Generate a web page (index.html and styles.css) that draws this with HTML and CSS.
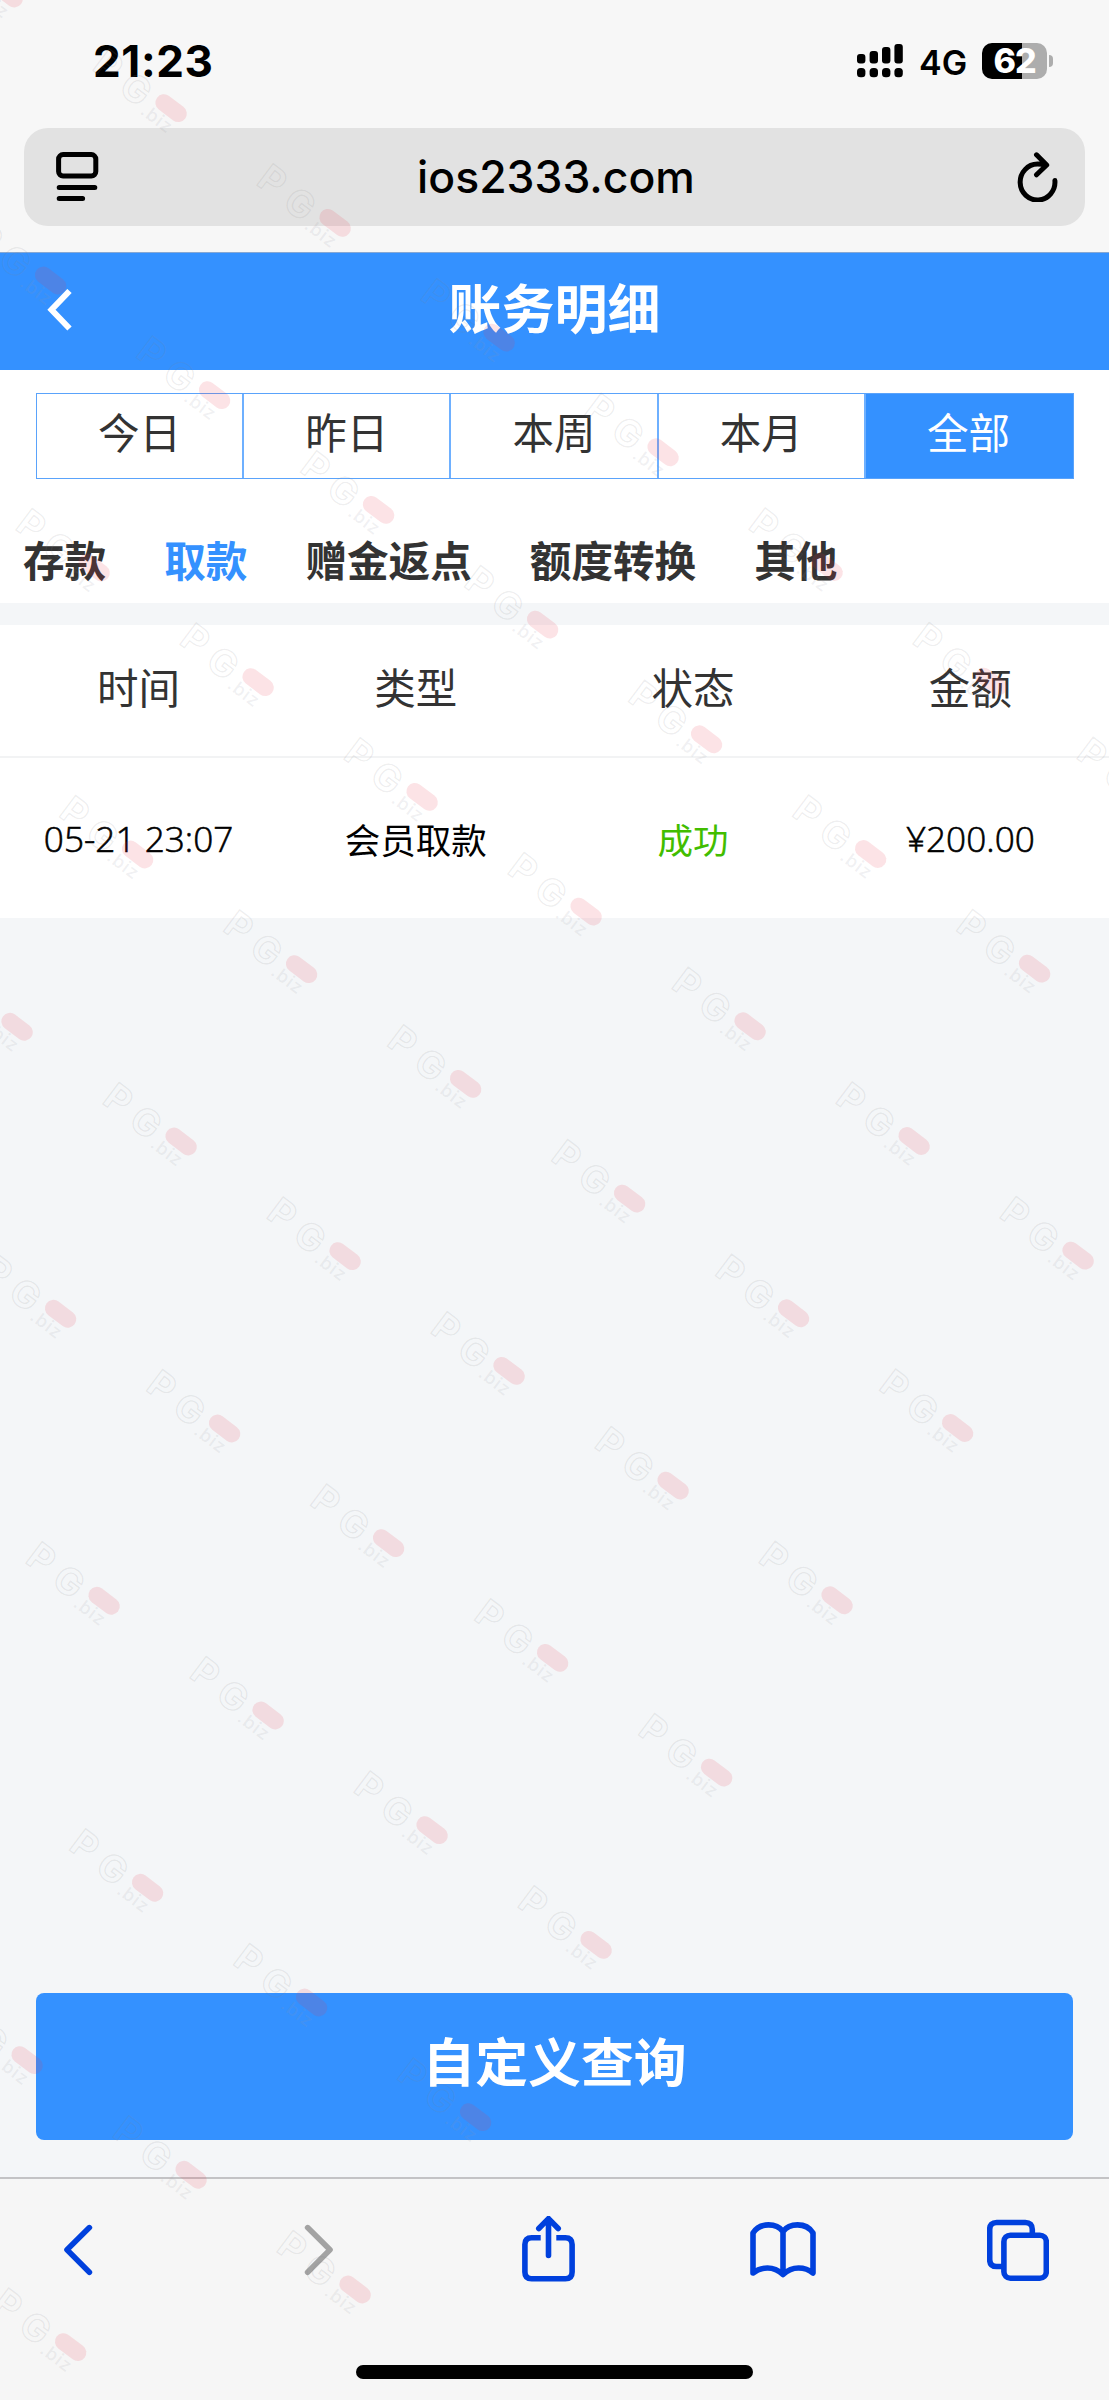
FILE: index.html
```html
<!DOCTYPE html>
<html lang="zh-CN">
<head>
<meta charset="utf-8">
<title>账务明细</title>
<link rel="stylesheet" href="styles.css">
</head>
<body>
<div class="phone">
  <div class="status-bar">
    <span class="clock">21:23</span>
    <div class="status-right">
      <svg class="signal" width="46" height="34" viewBox="0 0 46 34">
        <rect x="0" y="10" width="8.4" height="9.5" rx="3"/><rect x="12.6" y="7" width="8.4" height="12.5" rx="3"/><rect x="25" y="3" width="8.4" height="16.5" rx="3"/><rect x="37.4" y="0" width="8.4" height="19.5" rx="3"/>
        <rect x="0" y="24" width="8.4" height="9.3" rx="3.5"/><rect x="12.6" y="24" width="8.4" height="9.3" rx="3.5"/><rect x="25" y="24" width="8.4" height="9.3" rx="3.5"/><rect x="37.4" y="24" width="8.4" height="9.3" rx="3.5"/>
      </svg>
      <span class="network">4G</span>
      <div class="battery"><span class="battery-level">62</span><i class="battery-tip"></i></div>
    </div>
  </div>

  <div class="address-wrap">
    <div class="address-bar">
      <svg width="43" height="50" viewBox="0 0 43 50" fill="none" stroke="#000" stroke-width="5" stroke-linecap="round">
        <rect x="2.6" y="2.6" width="37.2" height="21.4" rx="4.5"/><path d="M3.2 35.4h35.6M3.2 46.6h23.4"/>
      </svg>
      <span class="domain">ios2333.com</span>
      <svg width="42" height="50" viewBox="0 0 42 50" fill="none" stroke="#000" stroke-width="5" stroke-linecap="round" stroke-linejoin="round">
        <path d="M38.900 28.600a17.400 18 0 1 1-17.400-16.500c3 0 6 .2 8.500 .8M20.500 2.800l10.200 10.200-10.200 9.800"/>
      </svg>
    </div>
  </div>

  <header class="page-header">
    <svg class="back" width="26" height="42" viewBox="0 0 26 42" fill="none" stroke="#fff" stroke-width="6"><path d="M22.500 2 4.500 20.800 22.500 39.500"/></svg>
    <h1>账务明细</h1>
  </header>

  <div class="filters">
    <div class="segments">
      <span>今日</span><span>昨日</span><span>本周</span><span>本月</span><span class="active">全部</span>
    </div>
    <nav class="tabs">
      <span>存款</span><span class="active">取款</span><span>赠金返点</span><span>额度转换</span><span>其他</span>
    </nav>
  </div>

  <div class="records">
    <div class="row row-head"><span>时间</span><span>类型</span><span>状态</span><span>金额</span></div>
    <div class="row row-data"><span class="num">05-21 23:07</span><span>会员取款</span><span class="ok">成功</span><span class="num">¥200.00</span></div>
  </div>

  <div class="query"><button class="query-button">自定义查询</button></div>

  <footer class="toolbar">
    <div class="tools">
      <svg width="30" height="66" viewBox="0 0 30 66"><path d="M26.400 11.600 4 33.800l22.400 22.400"/></svg>
      <svg class="disabled" width="30" height="66" viewBox="0 0 30 66"><path d="M3.600 11.600 26 33.800 3.600 56.200"/></svg>
      <svg width="53" height="66" viewBox="0 0 53 66"><path d="M26.500 3v36.500M16.800 12.500l9.700-9.900 9.700 9.900"/><path stroke-linecap="butt" d="M18.700 21.800h-9Q2.900 21.800 2.900 28.600v27.400Q2.900 62.800 9.700 62.800h33.600Q50.100 62.800 50.100 56V28.600Q50.100 21.800 43.300 21.800h-9"/></svg>
      <svg width="66" height="66" viewBox="0 0 66 66"><path d="M33 15.500Q28 8.900 18.500 8.900 8 8.900 3 17v40q6-5 14.500-5T33 58.500Q40 52 48.500 52T63 57V17Q58 8.900 47.500 8.900 38 8.900 33 15.500v43"/></svg>
      <svg width="62" height="66" viewBox="0 0 62 66"><path stroke-linecap="butt" d="M45.300 19v-5.500q0-7-7-7H9.700q-7 0-7 7v30q0 7 7 7h6"/><rect x="16.900" y="19.200" width="42.400" height="43" rx="6.500"/></svg>
    </div>
    <div class="home-indicator"></div>
  </footer>

  <svg class="watermarks" width="1109" height="2400" viewBox="0 0 1109 2400" aria-hidden="true">
    <defs>
      <g id="mark">
        <rect class="wm-pill" x="-18" y="-8.500" width="35" height="17" rx="8.500"/>
        <text class="wm-name" x="-88" y="17">P</text><text class="wm-name" x="-54" y="19">G</text>
        <text class="wm-suffix" x="-23" y="23">.biz</text>
      </g>
    </defs>
  </svg>
</div>
<script src="watermark.js"></script>
</body>
</html>
```
FILE: watermark.js
```js
// Repeats the brand mark along diagonals over the whole screen.
const layer = document.querySelector('.watermarks');
for (let row = 0; row <= 9; row++) {
  for (let col = -9; col <= 7 - row; col++) {
    const x = 171.5 + col * 164 + row * 43.5;
    const y = 108.5 + col * 114.7 + row * 287;
    if (x < -20 || x > 1185 || y < -20 || y > 2440) continue;
    const use = document.createElementNS('http://www.w3.org/2000/svg', 'use');
    use.setAttribute('href', '#mark');
    use.setAttribute('transform', `translate(${x} ${y}) rotate(37)`);
    layer.appendChild(use);
  }
}
```
FILE: styles.css
```css
* { box-sizing: border-box; }
body { margin: 0; font-family: "Noto Sans CJK SC", sans-serif; color: #333; }
.phone { position: relative; width: 1109px; height: 2400px; overflow: hidden; display: flex; flex-direction: column; background: #f4f6f8; }

.status-bar { height: 128px; flex: none; display: flex; justify-content: space-between; padding: 0 57px 6px 93px; align-items: center; background: #f7f7f7; color: #000; font-family: Inter, sans-serif; }
.clock { font-size: 44px; font-weight: 700; letter-spacing: 0.6px; }
.status-right { display: flex; align-items: center; }
.network { font-size: 34px; font-weight: 600; margin: 2px 14px 0 16px; width: 49px; }
.battery { position: relative; width: 65px; height: 36px; margin-right: 5px; border-radius: 10px; background: linear-gradient(90deg, #000 62%, #adadad 62%); display: flex; align-items: center; justify-content: center; }
.battery-level { color: #fff; font-size: 34px; font-weight: 800; line-height: 36px; letter-spacing: -1px; }
.battery-tip { position: absolute; left: 67px; top: 12px; width: 4px; height: 12px; border-radius: 0 4px 4px 0; background: #adadad; }

.address-wrap { flex: none; height: 124px; padding: 0 24px; background: #f7f7f7; }
.address-bar { height: 98px; border-radius: 24px; background: #e2e2e2; display: flex; align-items: center; justify-content: space-between; padding: 0 27px 0 32px; }
.domain { font-family: Inter, sans-serif; font-size: 44.500px; font-weight: 500; color: #000; margin-left: -3px; }

.page-header { flex: none; height: 118px; background: #3491ff; border-top: 1px solid #86a8d4; display: flex; align-items: center; justify-content: center; position: relative; padding-bottom: 12px; }
.page-header .back { position: absolute; left: 47px; top: 36px; }
h1 { margin: 0; font-size: 53px; font-weight: 700; line-height: 78px; color: #fff; }

.filters { flex: none; height: 233px; background: #fff; padding-top: 23px; }
.segments { margin: 0 35px 0 36px; height: 86px; display: grid; grid-template-columns: repeat(5, 1fr); border: 1px solid #5aa3fb; font-size: 41.500px; }
.segments span { display: flex; align-items: center; justify-content: center; padding-bottom: 11px; border-right: 2px solid #6eb0ff; }
.segments span.active { background: #3491ff; color: #fff; border-color: #3491ff; }
.tabs { display: flex; gap: 58px; padding: 49px 23px 0; font-size: 41.600px; line-height: 62px; font-weight: 700; }
.tabs .active { color: #3491ff; }

.records { flex: none; margin-top: 22px; height: 293px; background: #fff; }
.row { display: grid; grid-template-columns: repeat(4, 1fr); align-items: center; text-align: center; }
.row-head { height: 133px; padding-bottom: 9px; font-size: 41.500px; border-bottom: 2px solid #f2f3f4; }
.row-data { height: 160px; font-size: 35.500px; color: #000; }
.num { font-family: "Open Sans", "Noto Sans CJK SC", sans-serif; font-size: 35.200px; font-weight: 300; -webkit-text-stroke: 0.600px #000; }
.row-data .ok { color: #42bd00; }

.query { flex: 1; display: flex; align-items: flex-end; padding: 0 36px 37px; }
.query-button { width: 100%; height: 147px; border: 0; border-radius: 8px; padding: 0 0 15px; background: #3491ff; color: #fff; font-family: inherit; font-size: 52.800px; font-weight: 700; }

.toolbar { flex: none; height: 223px; background: #f6f6f6; border-top: 2px solid #c3c3c5; display: flex; flex-direction: column; align-items: center; padding-top: 37px; }
.tools { flex: none; width: 1175px; margin-right: 13px; display: grid; grid-template-columns: repeat(5, 1fr); justify-items: center; }
.tools svg { fill: none; stroke: #0040dd; stroke-width: 5.600; stroke-linecap: round; stroke-linejoin: round; }
.tools .disabled { stroke: #a3a3a3; margin-left: 12px; }
.home-indicator { width: 397px; height: 14px; margin-top: 83px; border-radius: 7px; background: #000; }

.watermarks { position: absolute; inset: 0; pointer-events: none; }
.wm-pill { fill: rgba(235, 60, 75, .14); }
.wm-name { font: 700 37px Inter, sans-serif; fill: none; stroke: rgba(130, 130, 135, .15); stroke-width: 1.200; }
.wm-suffix { font: 500 18px Inter, sans-serif; letter-spacing: 1px; fill: rgba(150, 150, 160, .14); }
```
